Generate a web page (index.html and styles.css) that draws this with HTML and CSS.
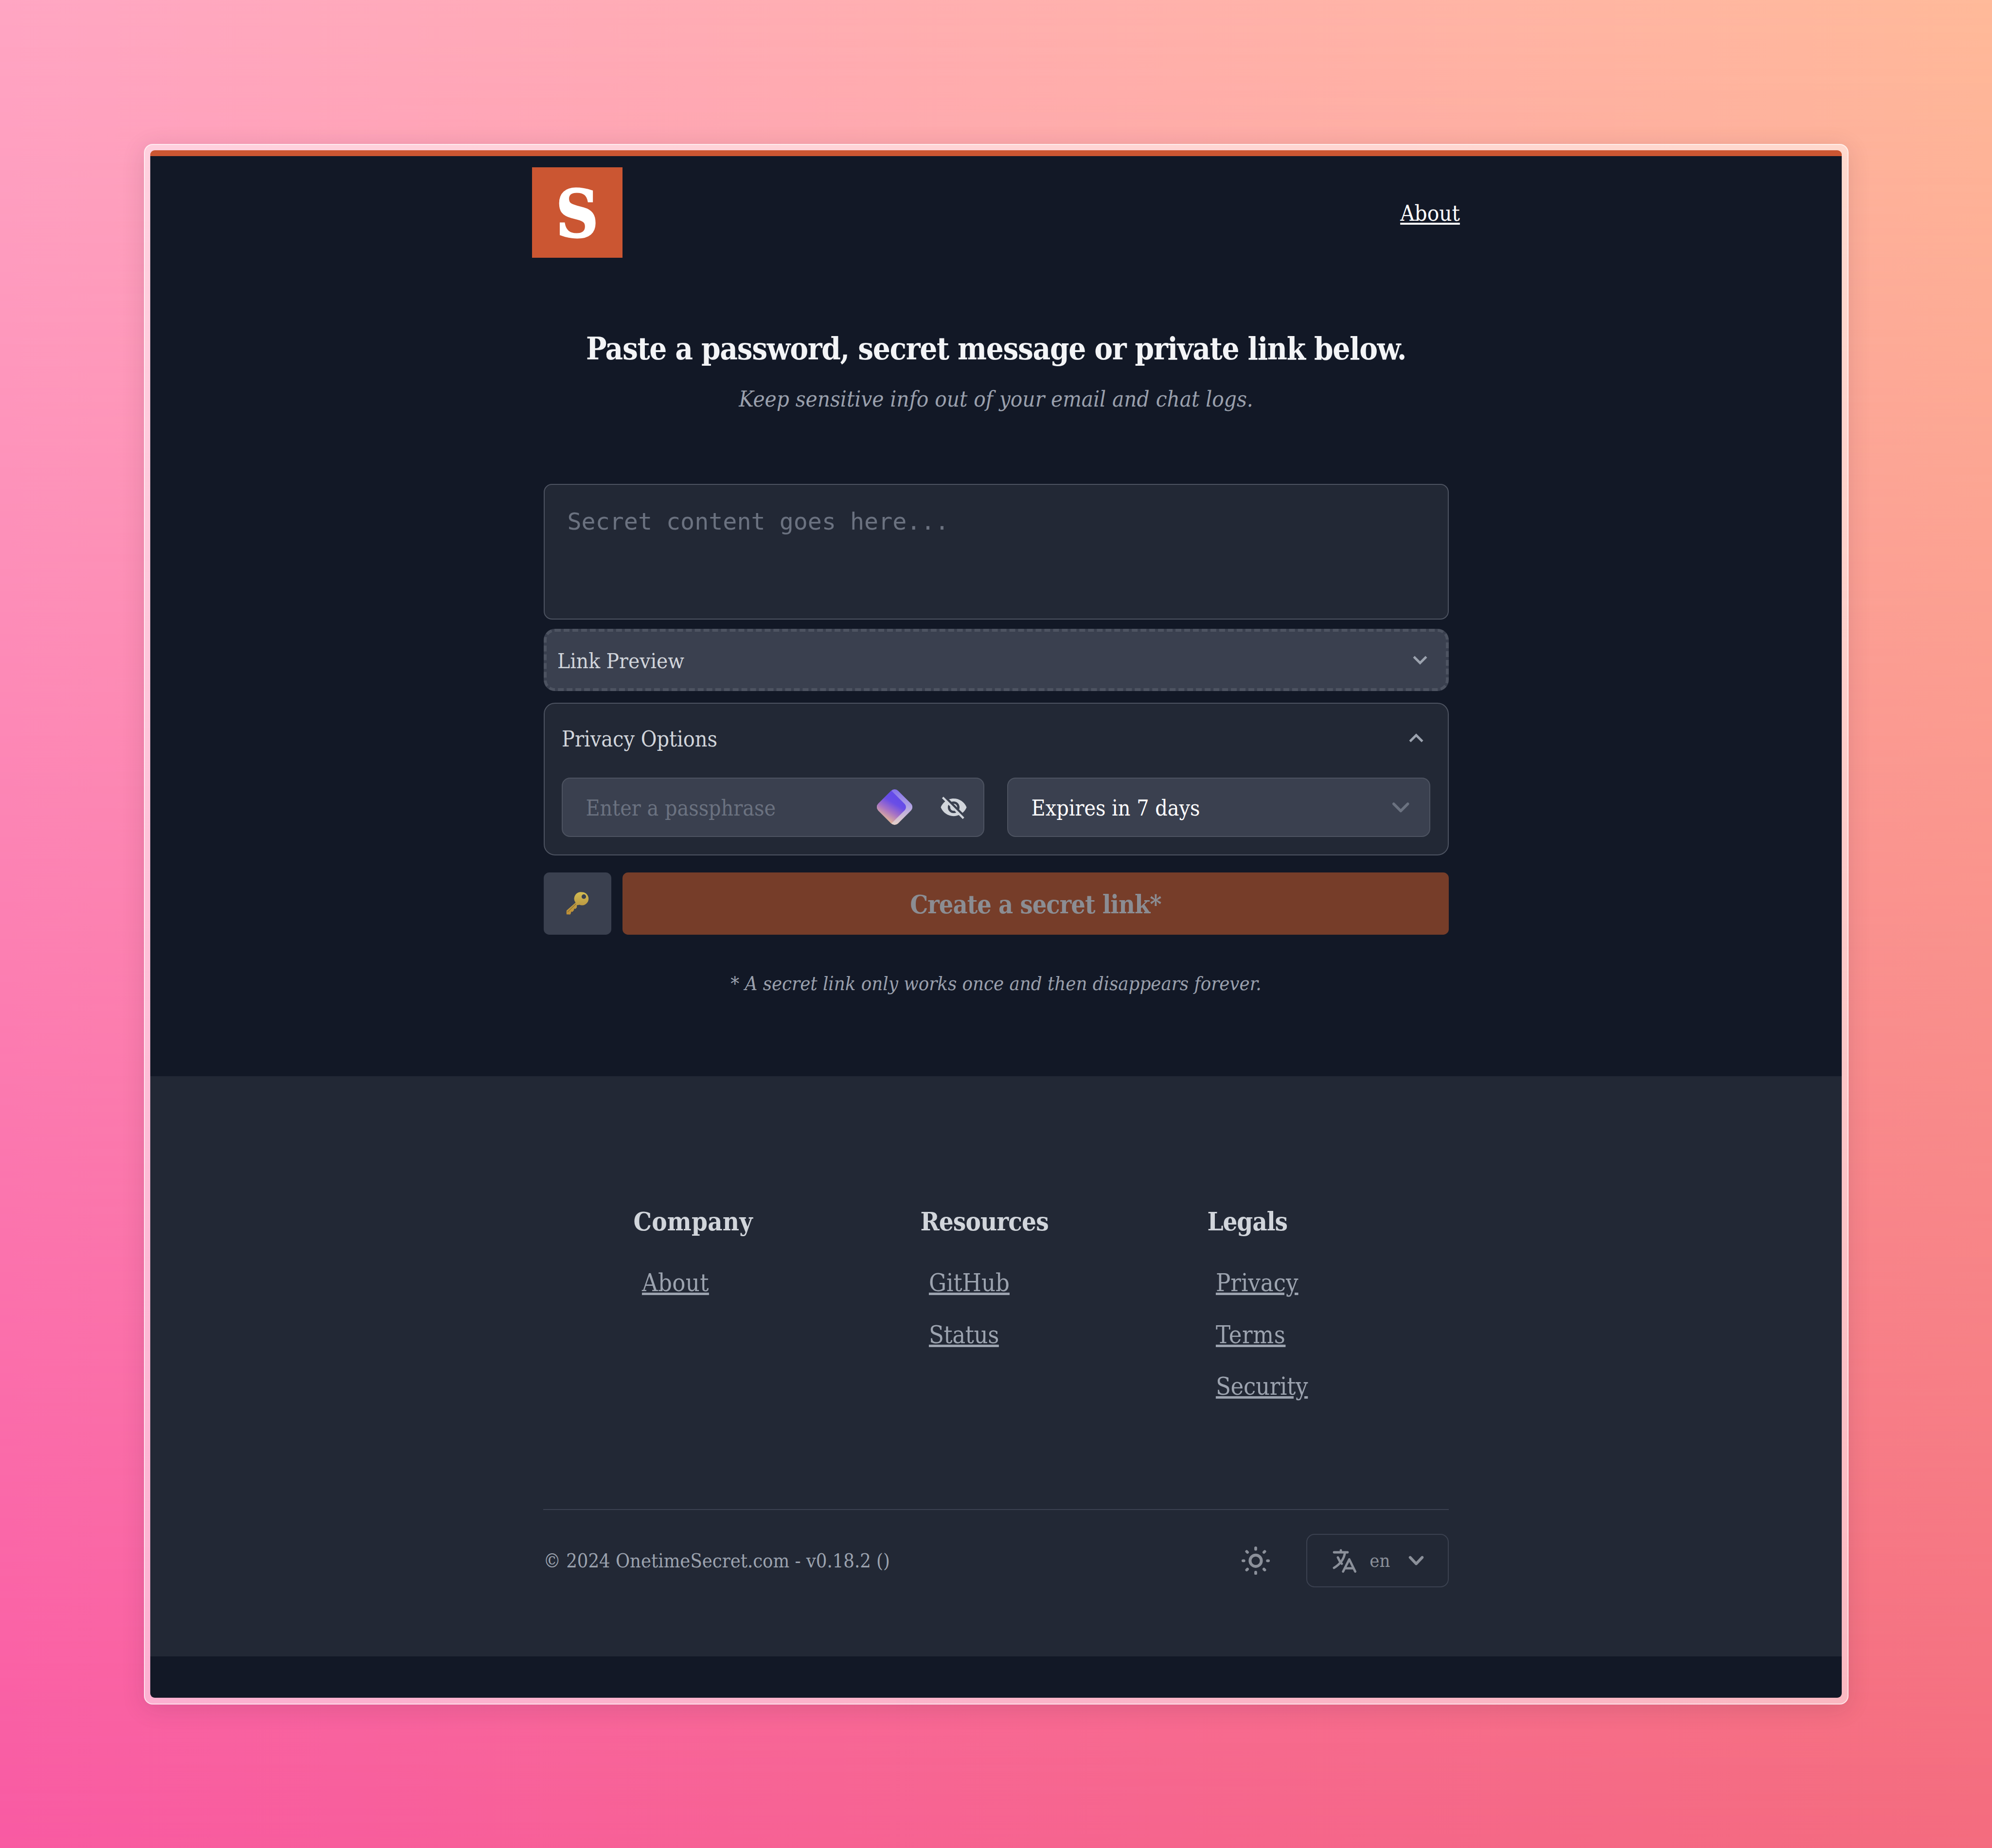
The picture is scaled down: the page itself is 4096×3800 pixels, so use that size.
FILE: index.html
```html
<!DOCTYPE html>
<html lang="en">
<head>
<meta charset="utf-8">
<title>Onetime Secret</title>
<link rel="stylesheet" href="styles.css">
</head>
<body>
<div class="frame">
  <div class="screen">
    <header class="header">
      <div class="logo">S</div>
      <a class="nav-link">About</a>
    </header>
    <main class="main">
      <h1 class="title">Paste a password, secret message or private link below.</h1>
      <p class="subtitle">Keep sensitive info out of your email and chat logs.</p>
      <div class="textarea">Secret content goes here...</div>
      <div class="preview">
        <span class="preview-label">Link Preview</span>
        <svg class="icon" viewBox="0 0 24 24"><path d="M7.41 8.58L12 13.17l4.59-4.59L18 10l-6 6-6-6z"/></svg>
      </div>
      <section class="options">
        <div class="options-head">
          <span class="options-label">Privacy Options</span>
          <svg class="icon" viewBox="0 0 24 24"><path d="M7.41 15.41L12 10.83l4.59 4.58L18 14l-6-6-6 6z"/></svg>
        </div>
        <div class="fields">
          <div class="field field-pass">
            <span class="placeholder">Enter a passphrase</span>
            <svg class="gem" viewBox="0 0 73.2 73.2">
              <defs>
                <linearGradient id="gemBack" x1="0" y1="0" x2="1" y2="1"><stop offset="0" stop-color="#7c69ec"/><stop offset=".5" stop-color="#b3a5e2"/><stop offset="1" stop-color="#ecd6c6"/></linearGradient>
                <linearGradient id="gemFront" gradientUnits="userSpaceOnUse" gradientTransform="rotate(-45 23 36.6)" x1="42" y1="20" x2="16" y2="62"><stop offset="0" stop-color="#644be8"/><stop offset=".22" stop-color="#6a4ee6"/><stop offset=".6" stop-color="#a873c4"/><stop offset="1" stop-color="#e2b596"/></linearGradient>
                <clipPath id="gemClip"><rect x="7.8" y="7.8" width="57.6" height="57.6" rx="10" transform="rotate(45 36.6 36.6)"/></clipPath>
              </defs>
              <rect x="7.8" y="7.8" width="57.6" height="57.6" rx="10" transform="rotate(45 36.6 36.6)" fill="url(#gemBack)"/>
              <g clip-path="url(#gemClip)"><rect x="-5.8" y="7.8" width="57.6" height="57.6" rx="9" transform="rotate(45 23 36.6)" fill="url(#gemFront)"/></g>
            </svg>
            <svg class="icon icon-eye" viewBox="0 0 24 24"><path d="M12 7c2.76 0 5 2.24 5 5 0 .65-.13 1.26-.36 1.83l2.92 2.92c1.51-1.26 2.7-2.89 3.43-4.75-1.73-4.39-6-7.5-11-7.5-1.4 0-2.74.25-3.98.7l2.16 2.16C10.74 7.13 11.35 7 12 7zM2 4.27l2.28 2.28.46.46C3.08 8.3 1.78 10.02 1 12c1.73 4.39 6 7.5 11 7.5 1.55 0 3.03-.3 4.38-.84l.42.42L19.73 22 21 20.73 3.27 3 2 4.27zM7.53 9.8l1.55 1.55c-.05.21-.08.43-.08.65 0 1.66 1.34 3 3 3 .22 0 .44-.03.65-.08l1.55 1.55c-.67.33-1.41.53-2.2.53-2.76 0-5-2.24-5-5 0-.79.2-1.53.53-2.2zm4.31-.78l3.15 3.15.02-.16c0-1.66-1.34-3-3-3l-.17.01z"/></svg>
          </div>
          <div class="field field-select">
            <span class="select-value">Expires in 7 days</span>
            <svg class="select-arrow" viewBox="0 0 20 20"><path d="M6 8l4 4 4-4"/></svg>
          </div>
        </div>
      </section>
      <div class="actions">
        <div class="key-button">
          <svg class="key" viewBox="0 0 46.8 46.8">
            <defs><linearGradient id="keyFill" x1="0" y1="0" x2="0" y2="1"><stop offset="0" stop-color="#d3bc52"/><stop offset=".5" stop-color="#bf9f45"/><stop offset="1" stop-color="#bd8e36"/></linearGradient></defs>
            <path fill="url(#keyFill)" fill-rule="evenodd" d="M32.7.4a13.6 13.6 0 1 1-5.2 26.2L22 27.6l.2 4.2-3 3.2-2.8-.6-.2 3.2-3 3.4-2.6-.4-.6 3-1.5 3-7.5-.3-.3-3.8.3-4.2L19.5 22A13.6 13.6 0 0 1 32.7.4zM36.500 5.100a4.600 4.600 0 1 0 0 9.200 4.600 4.600 0 0 0 0-9.200z"/>
            <path fill="none" stroke="#8e6d2e" stroke-width="1.2" d="M20.500 24.500L3 41.500"/>
          </svg>
        </div>
        <div class="create-button">Create a secret link*</div>
      </div>
      <p class="footnote">* A secret link only works once and then disappears forever.</p>
    </main>
    <footer class="footer">
      <div class="columns">
        <div class="column"><h2 class="col-title wide">Company</h2><a class="col-link about">About</a></div>
        <div class="column"><h2 class="col-title">Resources</h2><a class="col-link">GitHub</a><a class="col-link status">Status</a></div>
        <div class="column"><h2 class="col-title narrow">Legals</h2><a class="col-link">Privacy</a><a class="col-link terms">Terms</a><a class="col-link security">Security</a></div>
      </div>
      <div class="bottom">
        <span class="copyright">© 2024 OnetimeSecret.com - v0.18.2 ()</span>
        <div class="tools">
          <svg class="sun" viewBox="-29 -29.3 58 58.6"><circle r="11.6" stroke-width="6"/><path stroke-width="5.8" stroke-linecap="round" d="M0-26.4v2.8M0 26.4v-2.8M-26.200 0h2M26.200 0h-2M-18.600-19l1.700 1.700M18.600-19l-1.700 1.700M-18.600 19l1.700-1.700M18.600 19l-1.700-1.700"/></svg>
          <div class="lang">
            <svg class="translate" viewBox="0 0 49 49"><path d="M3 7h28M17.100 3v4M25.600 7C24 20 16 31 3 39M11 17.500c2 5 4.500 9 8 13M21.700 46.500L34.400 21.500 46.600 46.500M26 39.800h17"/></svg>
            <span class="lang-code">en</span>
            <svg class="icon icon-lang" viewBox="0 0 20 20"><path fill-rule="evenodd" d="M5.230 7.210a.75.75 0 011.060.020L10 11.168l3.710-3.938a.75.75 0 111.080 1.040l-4.250 4.500a.75.75 0 01-1.080 0l-4.250-4.500a.75.75 0 01.020-1.060z"/></svg>
          </div>
        </div>
      </div>
    </footer>
  </div>
</div>
</body>
</html>
```
FILE: styles.css
```css
* { box-sizing: border-box; }

html, body { margin: 0; }

body {
  position: relative;
  height: 3800px;
  padding: 295.5px;
  overflow: hidden;
  font-family: "DejaVu Serif Condensed", "DejaVu Serif", serif;
  background: linear-gradient(90deg, #ffa6c3, #ffba9a);
}

/* second colour row, faded in toward the bottom of the page */
body::before {
  content: "";
  position: absolute;
  inset: 0;
  background: linear-gradient(90deg, #f95aa2, #f46b7e);
  -webkit-mask-image: linear-gradient(180deg, transparent, #000);
  mask-image: linear-gradient(180deg, transparent, #000);
}

h1, h2, p { margin: 0; }

.frame {
  position: relative;
  height: 3209px;
  padding: 11.6px;
  border: 2px solid rgba(255, 255, 255, .6);
  border-radius: 18px;
  background: rgba(255, 255, 255, .5);
  box-shadow: 0 8px 48px rgba(60, 30, 60, .14);
}

.screen {
  height: 100%;
  border-radius: 9px;
  border-top: 12px solid #cb5632;
  background: #121826;
  overflow: hidden;
}

.header {
  display: flex;
  align-items: center;
  justify-content: space-between;
  width: 1907.7px;
  margin: 0 auto;
  padding-top: 22.7px;
}

.logo {
  display: flex;
  align-items: center;
  justify-content: center;
  width: 185.5px;
  height: 186px;
  padding: 9px 0 0 0;
  background: #cb5632;
  color: #fff;
  font-size: 134px;
  font-weight: 700;
  line-height: 1.164;
  -webkit-text-stroke: 3px #fff;
}

.nav-link {
  padding-top: 3px;
  color: #fff;
  font-size: 45.3px;
  text-decoration: underline;
  text-decoration-thickness: 4px;
  text-underline-offset: 4px;
}

.main {
  width: 1861px;
  margin: 0 auto;
}

.title {
  margin-top: 144.8px;
  color: #f3f4f6;
  font-size: 63px;
  line-height: 84px;
  letter-spacing: -1.35px;
  text-align: center;
  white-space: nowrap;
}

.subtitle {
  margin-top: 30.5px;
  color: #9aa0ad;
  font-size: 45.3px;
  font-style: italic;
  line-height: 64px;
  text-align: center;
}

.textarea {
  height: 279px;
  margin-top: 142.2px;
  padding: 39.7px 47px;
  border: 2px solid #4d5361;
  border-radius: 17px;
  background: #222835;
  color: #6b7280;
  font-family: "DejaVu Sans Mono", monospace;
  font-size: 48.3px;
  line-height: 70px;
}

.preview {
  display: flex;
  align-items: center;
  justify-content: space-between;
  height: 128.2px;
  margin-top: 19px;
  padding: 0 23.5px 0 22.5px;
  border: 6px dashed #4d5361;
  border-radius: 23px;
  background: #3a404f;
}

.preview-label, .options-label { padding-top: 2px; color: #d1d5db; }
.preview-label { font-size: 43.8px; }
.options-label { font-size: 44.4px; }

.icon {
  flex: none;
  width: 58px;
  height: 58px;
  fill: #9ca3af;
}

.options {
  height: 313.8px;
  margin-top: 23.4px;
  padding: 0 36px 0 35.5px;
  border: 2px solid #4d5361;
  border-radius: 23px;
  background: #222835;
}

.options-head {
  display: flex;
  align-items: center;
  justify-content: space-between;
  height: 142.8px;
}

.fields {
  display: grid;
  grid-template-columns: 1fr 1fr;
  gap: 46.7px;
  margin-top: 9.3px;
}

.field {
  display: flex;
  align-items: center;
  height: 122.2px;
  border: 2px solid #4d5361;
  border-radius: 17px;
  background: #3a404f;
  font-size: 44.3px;
}

.field-pass { padding: 0 32.5px 0 47.5px; }
.field-select { padding: 0 22px 0 47.5px; }

.placeholder, .select-value { flex: 1; padding-top: 2px; }
.placeholder { color: #6b7280; }
.select-value { color: #fff; }

.gem {
  width: 73.2px;
  height: 73.2px;
  margin-right: 55.5px;
}

.icon-eye { fill: #d1d5db; }

.select-arrow {
  width: 72.5px;
  height: 72.5px;
  fill: none;
  stroke: #6b7280;
  stroke-width: 1.5;
  stroke-linecap: round;
  stroke-linejoin: round;
}

.actions {
  display: flex;
  gap: 23px;
  height: 128px;
  margin-top: 35px;
}

.key-button {
  display: flex;
  align-items: center;
  justify-content: center;
  width: 139.8px;
  border-radius: 11.6px;
  background: #3a404f;
}

.key { width: 46.8px; height: 46.8px; }

.create-button {
  flex: 1;
  border-radius: 11.6px;
  background: #763d29;
  color: #8b8d93;
  font-size: 51.8px;
  font-weight: 700;
  line-height: 132px;
  letter-spacing: -1px;
  text-align: center;
}

.footnote {
  margin-top: 72.1px;
  color: #9aa0ad;
  font-size: 39.7px;
  font-style: italic;
  line-height: 56px;
  text-align: center;
}

.footer {
  height: 1193.6px;
  margin-top: 163px;
  padding: 264.4px 808.35px 0;
  background: #222835;
}

.columns {
  display: grid;
  grid-template-columns: repeat(3, 590px);
  height: 626px;
  padding-left: 185px;
}

.column {
  display: flex;
  flex-direction: column;
  align-items: flex-start;
}

.col-title {
  margin-bottom: 38.2px;
  color: #d1d5db;
  font-size: 52.4px;
  line-height: 70px;
  letter-spacing: -.9px;
}

.col-title.wide { letter-spacing: .2px; }
.col-title.narrow { letter-spacing: -1.1px; }

.col-link {
  margin-left: 17.5px;
  color: #9ca3af;
  font-size: 50.2px;
  line-height: 106.2px;
  text-decoration: underline;
  text-decoration-thickness: 4.5px;
  text-underline-offset: 3px;
}

.col-link.about { letter-spacing: .4px; }
.col-link.terms { letter-spacing: .6px; }
.col-link.status { letter-spacing: -.4px; }
.col-link.security { letter-spacing: -.3px; }

.bottom {
  display: flex;
  align-items: center;
  justify-content: space-between;
  height: 161px;
  padding-top: 49px;
  border-top: 2px solid #3b4150;
}

.copyright { color: #9ca3af; font-size: 39.5px; }

.tools { display: flex; align-items: center; gap: 75.6px; }

.sun {
  width: 58px;
  height: 58.6px;
  fill: none;
  stroke: #8b909a;
}

.lang {
  display: flex;
  align-items: center;
  width: 292.3px;
  height: 110.6px;
  padding-left: 52px;
  border: 2px solid #3b4150;
  border-radius: 17px;
}

.translate {
  width: 49px;
  height: 49px;
  fill: none;
  stroke: #8b909a;
  stroke-width: 4.8;
  stroke-linecap: round;
  stroke-linejoin: round;
}

.lang-code {
  margin: 0 25px 0 27px;
  color: #8b909a;
  font-size: 37.8px;
}

.icon-lang { fill: #8b909a; stroke: #8b909a; stroke-width: .5; }
```
